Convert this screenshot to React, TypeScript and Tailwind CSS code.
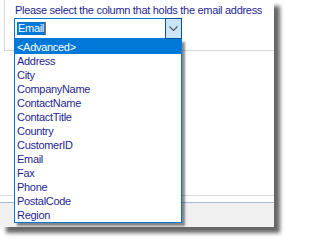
const columns = [
  "Address",
  "City",
  "CompanyName",
  "ContactName",
  "ContactTitle",
  "Country",
  "CustomerID",
  "Email",
  "Fax",
  "Phone",
  "PostalCode",
  "Region",
];

function ChevronDown() {
  return (
    <svg width="9" height="5" viewBox="0 0 9 5" fill="none">
      <path d="M0.5 0.5 L4.5 4.5 L8.5 0.5" stroke="#555" strokeWidth="1.1" />
    </svg>
  );
}

export default function App() {
  return (
    <div className="relative h-[243px] w-[289px] overflow-hidden bg-white font-['Liberation_Sans',Arial,sans-serif] text-[11px] tracking-[-0.3px] text-[#1f1f8f]">
      <div className="flex h-[227px] w-[274px] flex-col bg-white shadow-[6px_6px_4px_rgba(0,0,0,0.6)]">
        <div className="ml-[4px] h-[51px] border-b border-l border-[#d9d9d9]">
          <p className="whitespace-nowrap pl-[10px] pt-[4px] leading-[13px]">
            Please select the column that holds the email address
          </p>
        </div>
        <div className="flex-1" />
        <div className="h-[1px] bg-[#dadada]" />
        <div className="h-[6px]" />
        <div className="h-[25px] border-t border-[#a9b8cc] bg-[#f0f0f0]" />
      </div>

      {/* combo box */}
      <div className="absolute left-[14px] top-[18px] flex h-[21px] w-[168px] border border-[#0078d7] bg-white">
        <div className="flex flex-1 items-center pl-[2px]">
          <span className="bg-[#0078d7] px-[1px] leading-[13px] text-white">Email</span>
          <span className="h-[13px] w-[1px] bg-[#c0602a]" />
        </div>
        <div className="-my-[1px] -mr-[1px] flex w-[17px] items-center justify-center border border-[#005499] bg-[#cce4f7]">
          <ChevronDown />
        </div>
      </div>

      {/* open list */}
      <ul className="absolute left-[14px] top-[39px] w-[168px] border border-[#0078d7] bg-white shadow-[3px_3px_2px_rgba(0,0,0,0.45)]">
        <li className="h-[14px] bg-[#0078d7] pl-[2px] leading-[14px] text-white">&lt;Advanced&gt;</li>
        {columns.map((c) => (
          <li key={c} className="h-[14px] pl-[2px] leading-[14px]">
            {c}
          </li>
        ))}
      </ul>
    </div>
  );
}
